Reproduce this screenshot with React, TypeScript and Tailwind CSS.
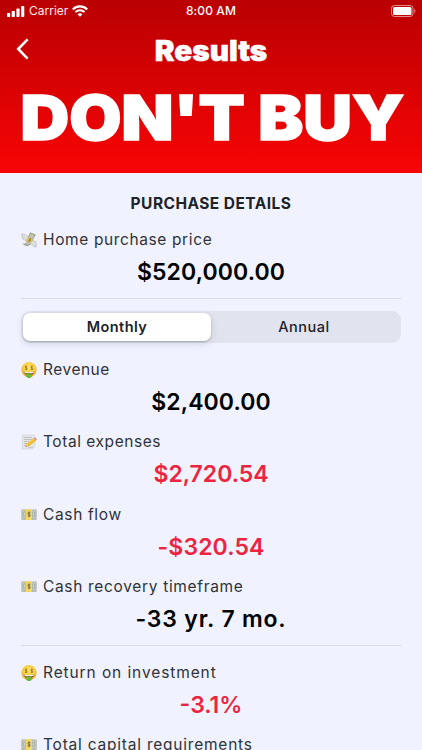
import { useState } from "react"

type IconName = "wings" | "face" | "memo" | "note"

type RowProps = {
  icon: IconName
  label: string
  labelClass: string
  value: string
  valueClass: string
}

function NoteIcon() {
  return (
    <svg viewBox="0 0 16 16" className="h-4 w-4 shrink-0">
      <rect x="0.4" y="2.4" width="15.2" height="10.4" rx="0.5" fill="#a9aea3" />
      <rect x="1.3" y="3.4" width="13.4" height="7.8" fill="#cdd0c6" />
      <ellipse cx="3.5" cy="7.3" rx="1.5" ry="2.6" fill="none" stroke="#989e94" strokeWidth="0.8" />
      <ellipse cx="12.5" cy="7.3" rx="1.5" ry="2.6" fill="none" stroke="#989e94" strokeWidth="0.8" />
      <rect x="5" y="2.2" width="6" height="10.8" fill="#f5d75c" />
      <rect x="6.2" y="3.9" width="3.6" height="6.8" rx="1.6" fill="#d8c883" />
      <path d="M9.3 5.8C8.7 5.1 7 5.3 7 6.3c0 1.2 2.2.8 2.2 2 0 1-1.7 1.1-2.4.4M8 4.5v5.4" fill="none" stroke="#67572b" strokeWidth="0.7" />
    </svg>
  )
}

function FaceIcon() {
  return (
    <svg viewBox="0 0 16 16" className="h-4 w-4 shrink-0">
      <defs>
        <radialGradient id="face" cx="0.5" cy="0.35" r="0.65">
          <stop offset="0" stopColor="#ffe56a" />
          <stop offset="0.65" stopColor="#fac83c" />
          <stop offset="1" stopColor="#e79b2b" />
        </radialGradient>
      </defs>
      <circle cx="8" cy="7.7" r="7.6" fill="url(#face)" />
      <path d="M2.7 9.2c2.8 1.2 7.8 1.2 10.6 0-.3 2.6-2.1 4.3-5.3 4.3s-5-1.7-5.3-4.3Z" fill="#77571e" />
      <path d="M3.3 9.6c2.5.9 6.9.9 9.4 0l-.3 1.1c-2.4.7-6.4.7-8.8 0Z" fill="#fff" />
      <path d="M5.4 11.7h5.2v2.2c0 1.3-1 2.1-2.6 2.1s-2.6-.8-2.6-2.1Z" fill="#66b83a" />
      <path d="M6.2 4.6c-.7-.6-2-.4-2 .5 0 1 2 .7 2 1.7 0 .9-1.4 1-2.1.4M5.2 3.6v4.5M11.8 4.6c-.7-.6-2-.4-2 .5 0 1 2 .7 2 1.7 0 .9-1.4 1-2.1.4M10.8 3.6v4.5" fill="none" stroke="#8b7322" strokeWidth="0.8" />
    </svg>
  )
}

function MemoIcon() {
  return (
    <svg viewBox="0 0 16 16" className="h-4 w-4 shrink-0">
      <path d="M1.2 1h12.6v12.2L11.6 15H1.2Z" fill="#e5e6e8" stroke="#c9cbce" strokeWidth="0.5" />
      <path d="M2.8 3.5h8M2.8 5.5h9M2.8 7.5h6M2.8 9.5h4M2.8 11.5h2.5M7 13.2h5" stroke="#aeb1b5" strokeWidth="0.7" />
      <path d="m4.6 12.6 1-3.1 6.9-5.2 2.2 2.8-6.9 5.1Z" fill="#f1b82d" />
      <path d="m5.8 10.4 7.2-5.5" stroke="#ffdc67" strokeWidth="0.9" />
      <path d="m12.5 4.3 1.1-.8c1-.6 2.7 1.5 1.9 2.3l-.8 1.3Z" fill="#e58982" />
      <path d="m4.6 12.6 1-3.1 2.2 2.7Z" fill="#e8c491" />
      <path d="m4.6 12.6.4-1.2.8 1Z" fill="#3b3b3b" />
    </svg>
  )
}

// banknote bundle tilted to the right, one wing on each side
function WingsIcon() {
  return (
    <svg viewBox="0 0 16 16" className="h-4 w-4 shrink-0">
      <path d="m9.2.6 5.6 1.9-5.1 9.8c-2.4 2.5-5.5 2.2-8.5-.7 2.1.4 3.9 0 4.7-1.6l-1.2-1Z" fill="#999e8b" />
      <path d="m9.7 1.8 3.8 1.4-4.7 8.6c-1.3 1.2-3 1.3-4.6.5 1.6-.4 2.3-1.4 2.9-2.5l-1.2-.8Z" fill="#c3c4b2" />
      <path d="m6.7 5.1 5.6 3-2 3.4-5.6-3.1Z" fill="#e6c65c" />
      <path d="M10.1 6.9c-.5-.6-1.5-.4-1.6.3s1.1.9.8 1.7c-.3.7-1.2.5-1.6 0M9.8 6 7.7 9.7" fill="none" stroke="#755e27" strokeWidth="0.7" />
      <path d="M6.8 6C6.2 3.2 3.8 1.6.4 2l1.1 1.6H.3L2 5.4.8 5.6l2 1.6-.8.6 3.2.6ZM9.6 10.4c-.2 2.3 1.6 4.1 5.6 4.8l-.6-1.4 1.3.1-.8-1.6.8-.3-1.4-1.6.9-.6-3-1.2Z" fill="#dcdeda" stroke="#b4b7b2" strokeWidth="0.5" />
    </svg>
  )
}

function IconOf({ name }: { name: IconName }) {
  switch (name) {
    case "wings":
      return <WingsIcon />
    case "face":
      return <FaceIcon />
    case "memo":
      return <MemoIcon />
    default:
      return <NoteIcon />
  }
}

function Row({ icon, label, labelClass, value, valueClass }: RowProps) {
  return (
    <div className="h-[72.25px] shrink-0">
      <div className="flex h-6 items-center gap-[6px]">
        <IconOf name={icon} />
        <span className={`whitespace-nowrap text-[15.5px] leading-6 text-[#303238] ${labelClass}`}>
          {label}
        </span>
      </div>
      <div className="flex h-10 items-center justify-center">
        <span className={`whitespace-nowrap text-[23px] font-semibold leading-10 ${valueClass}`}>
          {value}
        </span>
      </div>
    </div>
  )
}

function StatusBar() {
  return (
    <div className="grid h-[22px] grid-cols-3 items-center px-[7px] text-[12px] leading-[22px]">
      <div className="flex items-center">
        <svg viewBox="0 0 18 11" className="h-[11px] w-[18px]" fill="#fff">
          <rect x="0" y="7" width="3.2" height="4" rx="0.8" />
          <rect x="4.7" y="5" width="3.2" height="6" rx="0.8" />
          <rect x="9.4" y="2.5" width="3.2" height="8.5" rx="0.8" />
          <rect x="14.1" y="0" width="3.2" height="11" rx="0.8" />
        </svg>
        <span className="ml-[4px] text-[#ffe9e9]">Carrier</span>
        <svg viewBox="0 0 16 12" className="ml-[4px] h-[12px] w-[16px]" fill="none" stroke="#fff">
          <path d="M.8 4.4c4-4 10.4-4 14.4 0" strokeWidth="2.1" />
          <path d="M3.4 7.1c2.6-2.6 6.6-2.6 9.2 0" strokeWidth="2" />
          <path d="M8 11.7 5.6 9.3c1.3-1.3 3.5-1.3 4.8 0Z" fill="#fff" stroke="none" />
        </svg>
      </div>
      <span className="text-center font-medium tracking-[0.1px]">8:00 AM</span>
      <svg viewBox="0 0 25 12" className="-mr-[1px] h-[12px] w-[25px] justify-self-end">
        <rect x="0.5" y="0.5" width="21.5" height="11" rx="3" fill="none" stroke="#fff" strokeOpacity="0.55" />
        <rect x="2" y="2" width="18.5" height="8" rx="1.5" fill="#fff" />
        <path d="M23.3 4v4c1.5-.6 1.5-3.4 0-4Z" fill="#fff" fillOpacity="0.55" />
      </svg>
    </div>
  )
}

export default function App() {
  const [period, setPeriod] = useState("Monthly")

  return (
    <div className="flex h-[750px] w-full flex-col overflow-hidden bg-[#f0f3ff] font-['Inter',sans-serif]">
      <header className="h-[173px] shrink-0 bg-linear-to-b from-[#b90002] to-[#f90505] text-white">
        <StatusBar />
        <div className="grid h-[58px] grid-cols-[40px_1fr_40px] items-center">
          <svg viewBox="0 0 14 22" className="mb-[4px] ml-[16px] h-[22px] w-[14px]" fill="none" stroke="#fff" strokeWidth="2.6">
            <path d="M11.6 1.4 2.2 11l9.4 9.6" />
          </svg>
          <h1 className="scale-x-[1.06] text-center text-[28px] font-black leading-[58px] [-webkit-text-stroke:0.5px_white]">
            Results
          </h1>
        </div>
        <div className="flex h-[75px] items-center justify-center">
          <span className="ml-[2px] scale-x-[1.088] whitespace-nowrap text-[62px] font-black leading-[75px] [-webkit-text-stroke:1.6px_white]">
            DON'T BUY
          </span>
        </div>
      </header>

      <main className="flex flex-col px-[21px]">
        <h2 className="mt-[19px] h-6 text-center text-[15.5px] font-bold leading-6 tracking-[0.45px] text-[#212329]">
          PURCHASE DETAILS
        </h2>
        <div className="mt-[12px] flex h-[71px] flex-col border-b border-[#d8dbe6]">
          <Row
            icon="wings"
            label="Home purchase price"
            labelClass="tracking-[0.62px]"
            value="$520,000.00"
            valueClass="tracking-[0.1px] text-black"
          />
        </div>

        <div className="mt-[12px] grid h-[32px] grid-cols-2 rounded-[9px] bg-[#e1e3ee] p-[2px] text-[14.5px] text-[#212329]">
          {["Monthly", "Annual"].map((name) => (
            <button
              key={name}
              onClick={() => setPeriod(name)}
              className={
                period === name
                  ? "rounded-[7px] bg-white font-semibold tracking-[0.4px] shadow-[0_1px_2px_rgba(0,0,0,0.2),0_3px_8px_rgba(0,0,0,0.12)]"
                  : "rounded-[7px] pr-[2px] font-medium tracking-[0.55px]"
              }
            >
              {name}
            </button>
          ))}
        </div>

        <div className="mt-[15px] flex h-[288px] flex-col border-b border-[#d8dbe6]">
          <Row
            icon="face"
            label="Revenue"
            labelClass="tracking-[0.5px]"
            value="$2,400.00"
            valueClass="tracking-[0.1px] text-black"
          />
          <Row
            icon="memo"
            label="Total expenses"
            labelClass="tracking-[0.55px]"
            value="$2,720.54"
            valueClass="text-[#ed2440]"
          />
          <Row
            icon="note"
            label="Cash flow"
            labelClass="tracking-[0.65px]"
            value="-$320.54"
            valueClass="tracking-[0.1px] text-[#ed2440]"
          />
          <Row
            icon="note"
            label="Cash recovery timeframe"
            labelClass="tracking-[0.67px]"
            value="-33 yr. 7 mo."
            valueClass="tracking-[0.8px] text-black"
          />
        </div>

        <div className="mt-[15px] flex flex-col">
          <Row
            icon="face"
            label="Return on investment"
            labelClass="tracking-[0.9px]"
            value="-3.1%"
            valueClass="text-[#ed2440]"
          />
          <Row
            icon="note"
            label="Total capital requirements"
            labelClass="tracking-[0.78px]"
            value=""
            valueClass="text-black"
          />
        </div>
      </main>
    </div>
  )
}
